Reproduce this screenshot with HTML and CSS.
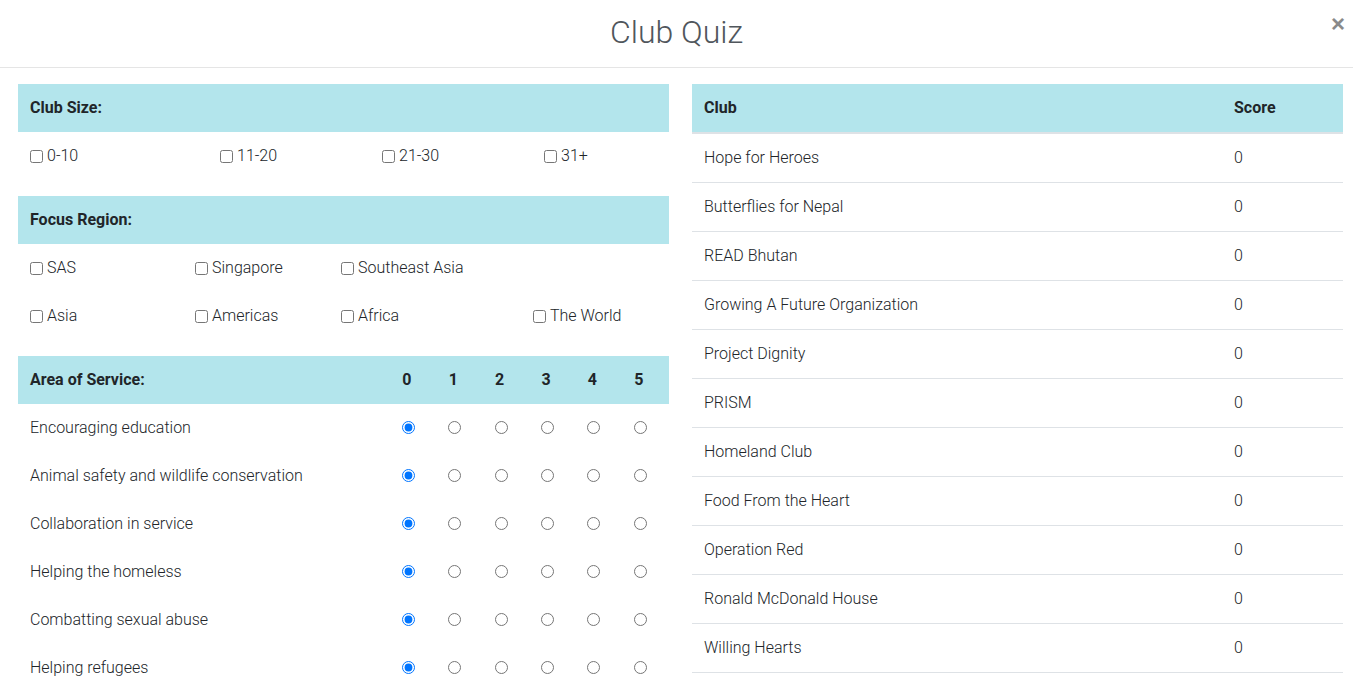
FILE: index.html
```html
<!DOCTYPE html>
<html lang="en">
<head>
<meta charset="utf-8">
<title>Club Quiz</title>
<link rel="stylesheet" href="styles.css">
</head>
<body>
<div class="modal">
  <header class="modal-header">
    <h1 class="modal-title">Club Quiz</h1>
    <button class="close" type="button" aria-label="Close">&times;</button>
  </header>
  <main class="modal-body">
    <section class="left">
      <div class="sec-head">Club Size:</div>
      <div class="opts size-grid">
        <label class="opt"><input type="checkbox">0-10</label>
        <label class="opt"><input type="checkbox">11-20</label>
        <label class="opt"><input type="checkbox">21-30</label>
        <label class="opt"><input type="checkbox">31+</label>
      </div>

      <div class="sec-head spaced">Focus Region:</div>
      <div class="opts region-grid">
        <label class="opt"><input type="checkbox">SAS</label>
        <label class="opt"><input type="checkbox">Singapore</label>
        <label class="opt"><input type="checkbox">Southeast Asia</label>
        <span class="opt"></span>
        <label class="opt"><input type="checkbox">Asia</label>
        <label class="opt"><input type="checkbox">Americas</label>
        <label class="opt"><input type="checkbox">Africa</label>
        <label class="opt"><input type="checkbox">The World</label>
      </div>

      <div class="sec-head spaced svc-grid">
        <span class="svc-label">Area of Service:</span>
        <span class="num">0</span><span class="num">1</span><span class="num">2</span><span class="num">3</span><span class="num">4</span><span class="num">5</span>
      </div>
      <div class="svc-grid svc-row">
        <span class="svc-label">Encouraging education</span>
        <span class="rad"><input type="radio" name="a" checked></span><span class="rad"><input type="radio" name="a"></span><span class="rad"><input type="radio" name="a"></span><span class="rad"><input type="radio" name="a"></span><span class="rad"><input type="radio" name="a"></span><span class="rad"><input type="radio" name="a"></span>
      </div>
      <div class="svc-grid svc-row">
        <span class="svc-label">Animal safety and wildlife conservation</span>
        <span class="rad"><input type="radio" name="b" checked></span><span class="rad"><input type="radio" name="b"></span><span class="rad"><input type="radio" name="b"></span><span class="rad"><input type="radio" name="b"></span><span class="rad"><input type="radio" name="b"></span><span class="rad"><input type="radio" name="b"></span>
      </div>
      <div class="svc-grid svc-row">
        <span class="svc-label">Collaboration in service</span>
        <span class="rad"><input type="radio" name="c" checked></span><span class="rad"><input type="radio" name="c"></span><span class="rad"><input type="radio" name="c"></span><span class="rad"><input type="radio" name="c"></span><span class="rad"><input type="radio" name="c"></span><span class="rad"><input type="radio" name="c"></span>
      </div>
      <div class="svc-grid svc-row">
        <span class="svc-label">Helping the homeless</span>
        <span class="rad"><input type="radio" name="d" checked></span><span class="rad"><input type="radio" name="d"></span><span class="rad"><input type="radio" name="d"></span><span class="rad"><input type="radio" name="d"></span><span class="rad"><input type="radio" name="d"></span><span class="rad"><input type="radio" name="d"></span>
      </div>
      <div class="svc-grid svc-row">
        <span class="svc-label">Combatting sexual abuse</span>
        <span class="rad"><input type="radio" name="e" checked></span><span class="rad"><input type="radio" name="e"></span><span class="rad"><input type="radio" name="e"></span><span class="rad"><input type="radio" name="e"></span><span class="rad"><input type="radio" name="e"></span><span class="rad"><input type="radio" name="e"></span>
      </div>
      <div class="svc-grid svc-row">
        <span class="svc-label">Helping refugees</span>
        <span class="rad"><input type="radio" name="f" checked></span><span class="rad"><input type="radio" name="f"></span><span class="rad"><input type="radio" name="f"></span><span class="rad"><input type="radio" name="f"></span><span class="rad"><input type="radio" name="f"></span><span class="rad"><input type="radio" name="f"></span>
      </div>
    </section>

    <section class="right">
      <div class="tbl-row tbl-head"><span>Club</span><span>Score</span></div>
      <div class="tbl-row"><span>Hope for Heroes</span><span>0</span></div>
      <div class="tbl-row"><span>Butterflies for Nepal</span><span>0</span></div>
      <div class="tbl-row"><span>READ Bhutan</span><span>0</span></div>
      <div class="tbl-row"><span>Growing A Future Organization</span><span>0</span></div>
      <div class="tbl-row"><span>Project Dignity</span><span>0</span></div>
      <div class="tbl-row"><span>PRISM</span><span>0</span></div>
      <div class="tbl-row"><span>Homeland Club</span><span>0</span></div>
      <div class="tbl-row"><span>Food From the Heart</span><span>0</span></div>
      <div class="tbl-row"><span>Operation Red</span><span>0</span></div>
      <div class="tbl-row"><span>Ronald McDonald House</span><span>0</span></div>
      <div class="tbl-row"><span>Willing Hearts</span><span>0</span></div>
    </section>
  </main>
</div>
</body>
</html>
```

FILE: styles.css
```css
* { box-sizing: border-box; }
html, body {
  margin: 0;
  padding: 0;
  background: #fff;
}
body {
  font-family: Roboto, "Liberation Sans", sans-serif;
  font-weight: 300;
  font-size: 16px;
  color: #212529;
}
.modal {
  height: 100vh;
  overflow: hidden;
}
.modal-header {
  position: relative;
  height: 68px;
  border-bottom: 1px solid #e5e5e5;
  display: flex;
  align-items: center;
  justify-content: center;
}
.modal-title {
  margin: 0;
  font-weight: 300;
  font-size: 32px;
  line-height: 1;
  color: #50565c;
  padding-bottom: 4px;
}
.close {
  position: absolute;
  top: 12px;
  right: 8px;
  border: 0;
  background: none;
  padding: 0;
  font-family: "Liberation Sans", Arial, sans-serif;
  font-size: 24px;
  font-weight: 700;
  line-height: 24px;
  color: #8a8a8a;
  cursor: pointer;
}
.modal-body {
  display: grid;
  grid-template-columns: 651px 651px;
  column-gap: 23px;
  padding: 16px 0 0 18px;
  align-items: start;
}
.sec-head {
  height: 48px;
  background: #b3e5ec;
  display: flex;
  align-items: center;
  padding: 0 12px 2px;
  font-weight: 700;
  font-size: 16px;
  color: #212529;
}
.sec-head.spaced { margin-top: 16px; }
.opts { display: grid; }
.size-grid { grid-template-columns: 190px 162px 162px 1fr; }
.region-grid { grid-template-columns: 165px 146px 192px 1fr; }
.opt {
  height: 48px;
  display: flex;
  align-items: center;
  padding: 0 0 2px 12px;
  color: #212529;
}
.opt input {
  margin: 2px 4px 0 0;
  width: 13px;
  height: 13px;
}
.svc-grid {
  display: grid;
  grid-template-columns: 1fr repeat(6, 46.4px);
  padding: 0 7px 2px 12px;
  align-items: center;
}
.sec-head.svc-grid { display: grid; }
.num { text-align: center; }
.svc-row { height: 48px; }
.rad {
  display: flex;
  justify-content: center;
  padding-left: 3px;
}
.rad input {
  margin: 0;
  width: 13px;
  height: 13px;
}
.tbl-row {
  display: grid;
  grid-template-columns: 1fr 121px;
  align-items: center;
  height: 49px;
  border-bottom: 1px solid #dee2e6;
  padding-bottom: 2px;
}
.tbl-row span { padding-left: 12px; }
.tbl-head {
  height: 50px;
  background: #b3e5ec;
  font-weight: 700;
  border-bottom: 2px solid #dee2e6;
}
```
